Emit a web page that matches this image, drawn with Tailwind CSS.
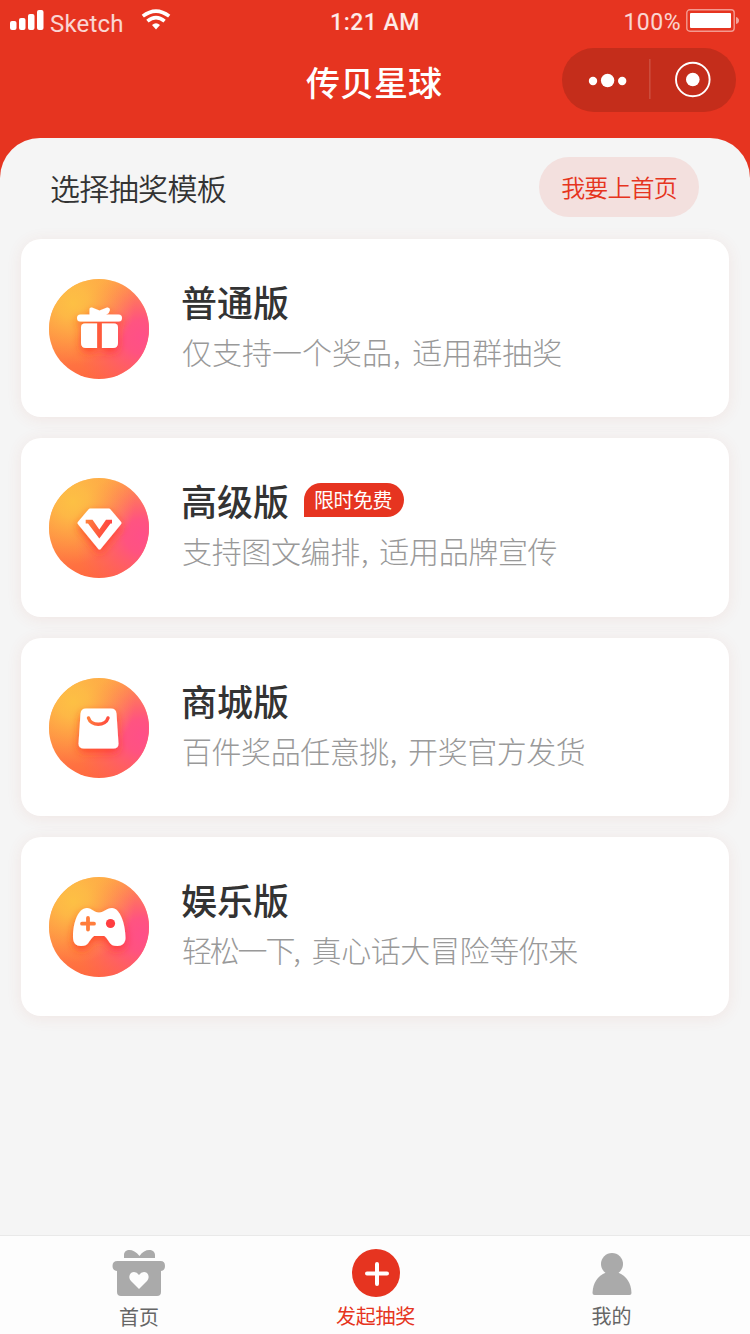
<!DOCTYPE html>
<html lang="zh-CN">
<head>
<meta charset="utf-8">
<title>传贝星球</title>
<script src="https://cdn.jsdelivr.net/npm/@tailwindcss/browser@4"></script>
</head>
<body class="w-[750px] h-[1334px] overflow-hidden bg-[#e63420] font-['Noto_Sans_CJK_SC',sans-serif]">
<svg class="absolute size-0" aria-hidden="true">
  <defs>
    <linearGradient id="base" x1="0.4" y1="0" x2="0.5" y2="1"><stop offset="0" stop-color="#ffa848"/><stop offset="1" stop-color="#ff6840"/></linearGradient>
    <radialGradient id="pink" cx="0.93" cy="0.58" r="0.68"><stop offset="0" stop-color="#ff4f88"/><stop offset="0.25" stop-color="#ff4f86" stop-opacity="0.92"/><stop offset="1" stop-color="#ff5a64" stop-opacity="0"/></radialGradient>
    <radialGradient id="gold" cx="0.24" cy="0.24" r="0.62"><stop offset="0" stop-color="#fdc044"/><stop offset="0.25" stop-color="#fdbe46" stop-opacity="0.85"/><stop offset="1" stop-color="#ffa846" stop-opacity="0"/></radialGradient>
    <linearGradient id="cut" gradientUnits="userSpaceOnUse" x1="36" y1="42" x2="64" y2="50"><stop offset="0" stop-color="#ff843c"/><stop offset="1" stop-color="#ff3c40"/></linearGradient>
    <filter id="glow" x="-40%" y="-40%" width="180%" height="190%"><feDropShadow dx="0" dy="4" stdDeviation="4" flood-color="#ff2a1a" flood-opacity="0.65"/></filter>
    <g id="disc"><circle cx="50" cy="50" r="50" fill="url(#base)"/><circle cx="50" cy="50" r="50" fill="url(#pink)"/><circle cx="50" cy="50" r="50" fill="url(#gold)"/></g>
  </defs>
</svg>
<div class="flex h-full flex-col">
  <header class="h-[138px] text-white">
    <div class="flex h-10 items-center font-['Roboto',sans-serif] text-[23px]">
      <div class="flex w-[250px] items-center pl-[10px]">
        <svg class="mb-px" width="34" height="20" viewBox="0 0 34 20" fill="#fff"><rect y="11" width="6.5" height="9" rx="2"/><rect x="9" y="8" width="6.5" height="12" rx="2"/><rect x="18" y="4" width="6.5" height="16" rx="2"/><rect x="27" width="6.5" height="20" rx="2"/></svg>
        <span class="ml-[6px] mt-[8px] w-[74px] text-[24px] leading-8 tracking-[0.2px] text-white/80">Sketch</span>
        <svg class="ml-[17px] mb-px" width="30" height="21" viewBox="0 0 30 21" fill="none" stroke="#fff" stroke-width="3.6"><path d="M1.8 7.2Q15 -3 28.2 7.2"/><path d="M6.4 12.1Q15 5 23.6 12.1"/><path d="M11 16Q15 12.5 19 16L15 20.5Z" fill="#fff" stroke="none"/></svg>
      </div>
      <div class="mt-[5px] w-[250px] text-center font-medium leading-8 tracking-[0.5px] text-white/90">1:21 AM</div>
      <div class="flex w-[250px] items-center justify-end pr-[10px]">
        <span class="mt-[5px] leading-8 tracking-[0.5px] text-white/80">100%</span>
        <svg class="ml-[5px]" width="54" height="23" viewBox="0 0 54 23"><rect x=".8" y=".8" width="47.4" height="21.4" rx="3" fill="none" stroke="#fff" stroke-opacity=".5" stroke-width="1.4"/><rect x="4" y="4" width="41" height="15" rx="1" fill="#fff"/><path d="M50 8q3 1 3 3.5t-3 3.5z" fill="#fff" fill-opacity=".55"/></svg>
      </div>
    </div>
    <div class="flex pt-2">
      <div class="w-[187px]"></div>
      <h1 class="mr-px w-[374px] pt-[10px] text-center text-[34px] font-medium leading-[48px]">传贝星球</h1>
      <div class="flex h-16 w-[174px] items-center rounded-full bg-[#c42d1b]">
        <svg width="174" height="64" viewBox="0 0 174 64" fill="#fff"><circle cx="31" cy="33" r="4.2"/><circle cx="45.6" cy="32.5" r="6.7"/><circle cx="60.2" cy="33" r="4.2"/><rect x="87" y="11" width="1.6" height="40" fill-opacity=".15"/><circle cx="130.8" cy="31.5" r="16.8" fill="none" stroke="#fff" stroke-width="1.9"/><circle cx="130.8" cy="31.5" r="6.8"/></svg>
      </div>
    </div>
  </header>
  <main class="h-[1097px] rounded-t-[40px] bg-[#f5f5f5] px-[21px] pt-[19px]">
    <div class="flex h-[60px] items-center justify-between pl-[29px] pr-[30px]">
      <h2 class="text-[30px] font-[350] leading-[60px] tracking-[-0.65px] text-[#333]">选择抽奖模板</h2>
      <button class="h-[60px] w-[160px] rounded-full bg-[#f3e0de] text-[24px] font-[350] tracking-[-0.9px] text-[#e63420]">我要上首页</button>
    </div>
    <div class="mt-[21.5px] flex flex-col gap-[21px]">
      <section class="flex h-[178.5px] rounded-[20px] bg-white pl-7 pt-10 shadow-[0_2px_16px_rgba(200,80,60,0.09)]">
        <svg class="shrink-0" width="100" height="100" viewBox="0 0 100 100"><use href="#disc"/><g filter="url(#glow)" fill="#fff"><rect x="28" y="35.5" width="45" height="7" rx="3.5"/><path d="M40.5 36V30Q40.5 28 43 28.5L50.5 31.5L58 28.5Q61 28 61 31Q60.500 34 57 36Z"/><path d="M36 44.500H48.300V69H37Q32 69 32 64V48.500Q32 44.500 36 44.500ZM52.700 44.500H65Q69 44.500 69 48.500V64Q69 69 64 69H52.700Z"/></g><rect x="48.300" y="43.500" width="4.400" height="25.500" fill="#ff5a3c"/></svg>
        <div class="-mt-[3px] ml-[32px]"><h3 class="text-[36px] font-medium leading-[50px] text-[#333]">普通版</h3><p class="whitespace-nowrap pl-px text-[30px] font-light leading-[50px] text-[#999]">仅支持一个奖品<span class="ml-px mr-[5px]">,</span> 适用群抽奖</p></div>
      </section>
      <section class="flex h-[178.5px] rounded-[20px] bg-white pl-7 pt-10 shadow-[0_2px_16px_rgba(200,80,60,0.09)]">
        <svg class="shrink-0" width="100" height="100" viewBox="0 0 100 100"><use href="#disc"/><path filter="url(#glow)" d="M41 32H60L71 45L50.500 70L30 45Z" fill="#fff" stroke="#fff" stroke-width="3" stroke-linejoin="round"/><path d="M36.700 41.700H43.500L50.300 51.500L57 41.700H63V45.500H61.500L50.300 60.500L39 45.500H36.700Z" fill="url(#cut)"/></svg>
        <div class="-mt-[3px] ml-[32px]"><div class="flex items-center"><h3 class="text-[36px] font-medium leading-[50px] text-[#333]">高级版</h3><span class="ml-[15px] h-[34px] w-[100px] rounded-[17px] rounded-bl-none bg-[#e63420] pr-[2px] text-center text-[20px] leading-[34px] tracking-[-0.5px] text-white">限时免费</span></div><p class="whitespace-nowrap pl-px text-[30px] font-light leading-[50px] tracking-[-0.35px] text-[#999]">支持图文编排<span class="ml-px mr-[5px]">,</span> 适用品牌宣传</p></div>
      </section>
      <section class="flex h-[178.5px] rounded-[20px] bg-white pl-7 pt-10 shadow-[0_2px_16px_rgba(200,80,60,0.09)]">
        <svg class="shrink-0" width="100" height="100" viewBox="0 0 100 100"><use href="#disc"/><path filter="url(#glow)" d="M37 30.500H62Q67 30.500 67.500 35.500L69.500 65.500Q69.500 70.500 64.500 70.500H35Q29.500 70.500 29.500 65.500L31.500 35.500Q32 30.500 37 30.500Z" fill="#fff"/><path d="M39.500 40A10 8 0 0 0 59 40" fill="none" stroke="url(#cut)" stroke-width="3.4" stroke-linecap="round"/></svg>
        <div class="-mt-[3px] ml-[32px]"><h3 class="text-[36px] font-medium leading-[50px] text-[#333]">商城版</h3><p class="whitespace-nowrap pl-px text-[30px] font-light leading-[50px] tracking-[-0.45px] text-[#999]">百件奖品任意挑<span class="ml-px mr-[5px]">,</span> 开奖官方发货</p></div>
      </section>
      <section class="flex h-[178.5px] rounded-[20px] bg-white pl-7 pt-10 shadow-[0_2px_16px_rgba(200,80,60,0.09)]">
        <svg class="shrink-0" width="100" height="100" viewBox="0 0 100 100"><use href="#disc"/><path filter="url(#glow)" d="M38 31C43 31 44.500 35.500 50 35.500S57 31 63 31C71 31 76.500 47 76.500 61C76.500 66 73 69 68.500 69C60 69 61 64 55.500 59H45C39 64 40 69 32 69C27 69 24 66 24 60C24 46 29 31 38 31Z" fill="#fff"/><path d="M39 41V52.500M33 46.700H45" stroke="#ff7d3c" stroke-width="3.800" stroke-linecap="round"/><circle cx="61.500" cy="46.500" r="4.600" fill="#ff3d40"/></svg>
        <div class="-mt-[3px] ml-[32px]"><h3 class="text-[36px] font-medium leading-[50px] text-[#333]">娱乐版</h3><p class="whitespace-nowrap pl-px text-[30px] font-light leading-[50px] tracking-[-0.4px] text-[#999]"><span class="tracking-[-2.2px]">轻松一下</span><span class="mr-[5px]">,</span> 真心话大冒险等你来</p></div>
      </section>
    </div>
  </main>
  <nav class="flex h-[99px] border-t border-[#e9e9e9] bg-[#fdfdfd] pl-5 text-[20px] leading-7 text-[#666]">
    <a class="flex w-[238px] flex-col items-center pt-[13px]">
      <svg width="54" height="48" viewBox="0 0 54 48" fill="#aaa"><path d="M12 9V6C12 0 21-1.500 27.500 7C33-1.500 43 0 43 6V9Z"/><path d="M5.500 12H48.500Q53 12 53 17Q53 21.500 49 22V43Q49 47 45 47H9Q5 47 5 43V22Q.5 21.500 .5 17Q.5 12 5.500 12Z"/><path d="M27 40L19 32C15.500 28 18 23 22 23Q25 23 27 26Q29 23 32 23C36 23 38.500 28 35 32Z" fill="#fdfdfd"/></svg>
      <span class="mt-[6px]">首页</span>
    </a>
    <a class="flex w-[236px] flex-col items-center pt-[13px] text-[#e63420]">
      <svg width="48" height="48" viewBox="0 0 48 48"><circle cx="24" cy="24" r="24" fill="#e63420"/><path d="M25 15V35M15 24.500H35" stroke="#fff" stroke-width="4" stroke-linecap="round"/></svg>
      <span class="mr-px mt-[5px] tracking-[-0.2px]">发起抽奖</span>
    </a>
    <a class="flex w-[236px] flex-col items-center pt-[16px]">
      <svg width="40" height="44" viewBox="0 0 40 44" fill="#aaa"><circle cx="20" cy="12" r="11"/><path d="M14 20.500H26Q39 26 39.500 41Q39.500 43 37.500 43H2.500Q.5 43 .5 41Q1 26 14 20.500Z"/></svg>
      <span class="mr-px mt-[6px]">我的</span>
    </a>
  </nav>
</div>
</body>
</html>
